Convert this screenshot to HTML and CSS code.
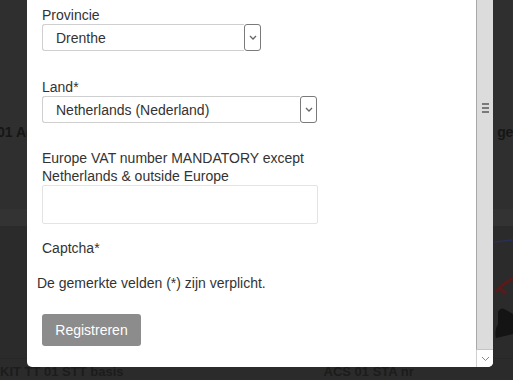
FILE: index.html
```html
<!DOCTYPE html>
<html lang="nl">
  <head>
    <meta charset="UTF-8" />
    <title>Registreren</title>
    <link rel="stylesheet" href="styles.css">
  </head>
  <body>
    <div class="page">
      <div class="top-row">
        <h3 class="card-title left-title">01 Accessoires</h3>
        <h3 class="card-title right-title">ge</h3>
      </div>
      <div class="band"></div>
      <div class="bottom-row">
        <div class="product-pic">
          <svg width="21" height="110" viewBox="0 0 21 110">
            <path d="M2 8 L21 6" stroke="#2a2f55" stroke-width="1.5" fill="none" />
            <path d="M3 58 L12 50 L21 44 M8 54 L14 60" stroke="#5a1a1a" stroke-width="3" fill="none" />
            <path d="M6 78 Q9 72 14 76 L21 80 L21 100 L4 104 Q2 96 6 90 Z" fill="#141414" />
          </svg>
        </div>
      </div>
      <div class="footer-row">
        <span class="footer-text">KIT TT 01 STT basis</span>
        <span class="footer-text second">ACS 01 STA nr</span>
      </div>
    </div>

    <div class="modal">
      <div class="modal-content">
        <form id="registratie">
          <div class="field field-provincie">
            <label class="field-label" for="provincie">Provincie</label>
            <div class="select-box short">
              <select id="provincie" class="select-field">
                <option>Drenthe</option>
              </select>
              <span class="select-arrow">
                <svg width="8" height="5" viewBox="0 0 8 5"><path d="M1 1 L4 4 L7 1" stroke="#666" stroke-width="1.3" fill="none" /></svg>
              </span>
            </div>
          </div>
          <div class="field field-land">
            <label class="field-label" for="land">Land*</label>
            <div class="select-box long">
              <select id="land" class="select-field">
                <option>Netherlands (Nederland)</option>
              </select>
              <span class="select-arrow">
                <svg width="8" height="5" viewBox="0 0 8 5"><path d="M1 1 L4 4 L7 1" stroke="#666" stroke-width="1.3" fill="none" /></svg>
              </span>
            </div>
          </div>
          <div class="field field-vat">
            <label class="field-label" for="vat">Europe VAT number MANDATORY except Netherlands &amp; outside Europe</label>
            <input type="text" id="vat" class="input-field" />
          </div>
          <div class="field field-captcha">
            <label class="field-label">Captcha*</label>
          </div>
          <p class="required-note">De gemerkte velden (*) zijn verplicht.</p>
          <div class="field">
            <button type="submit" class="submit-btn">Registreren</button>
          </div>
        </form>
      </div>
      <div class="scrollbar">
        <div class="scroll-thumb">
          <span class="grip"></span>
          <span class="grip"></span>
          <span class="grip"></span>
        </div>
        <div class="scroll-down">
          <svg width="9" height="6" viewBox="0 0 9 6"><path d="M1 1 L4.5 4.5 L8 1" stroke="#888" stroke-width="1" fill="none" /></svg>
        </div>
      </div>
    </div>
  </body>
</html>
```

FILE: styles.css
```css
body {
  margin: 0;
  background: #2b2b2b;
  font: 14px "Liberation Sans", Arial, Helvetica, sans-serif;
  color: #333;
  overflow: hidden;
  height: 380px;
}

/* dimmed page behind the popup */
.page {
  width: 513px;
  height: 380px;
  display: flex;
  flex-direction: column;
}
.top-row {
  height: 215px;
  background: #2f2f2f;
  display: flex;
  justify-content: space-between;
  align-items: flex-start;
}
.card-title {
  margin: 0;
  padding-top: 124px;
  font-size: 14px;
  font-weight: bold;
  line-height: 16px;
  color: #161616;
  white-space: nowrap;
}
.left-title {
  text-indent: -3px;
}
.right-title {
  letter-spacing: -0.3px;
}
.band {
  height: 17px;
  background: #333;
}
.bottom-row {
  height: 136px;
  display: flex;
  justify-content: flex-end;
}
.product-pic {
  padding-top: 8px;
}
.footer-row {
  flex: 1;
  display: flex;
  gap: 200px;
  background: #2b2b2b;
  border-top: 1px solid #272727;
}
.footer-text {
  font-size: 13px;
  font-weight: bold;
  color: #1c1c1c;
  line-height: 16px;
  margin-top: 5px;
  white-space: nowrap;
}

/* popup */
.modal {
  position: absolute;
  left: 27px;
  top: -20px;
  width: 466px;
  height: 387px;
  background: #fff;
  border-radius: 5px;
  overflow: hidden;
  display: flex;
}
.modal-content {
  flex: 1;
  padding: 26px 10px 0 10px;
}
.field {
  margin-left: 5px;
}
.field-label {
  display: block;
  line-height: 18px;
  color: #333;
}
.field-provincie {
  margin-bottom: 27px;
}
.field-land {
  margin-bottom: 26px;
}
.field-vat {
  width: 276px;
  margin-bottom: 15px;
}
.field-captcha {
  margin-bottom: 17px;
}

.select-box {
  display: flex;
  height: 27px;
}
.select-box.short {
  width: 219px;
}
.select-box.long {
  width: 275px;
}
.select-field {
  flex: 1;
  -webkit-appearance: none;
  appearance: none;
  border: 1px solid #cfcfcf;
  border-right: none;
  border-radius: 3px 0 0 3px;
  padding: 0 0 0 13px;
  margin: 0;
  font: 14px "Liberation Sans", Arial, sans-serif;
  color: #333;
  background: #fff;
  outline: none;
}
.select-arrow {
  width: 15px;
  border: 1px solid #7a7a7a;
  border-radius: 3px;
  display: flex;
  align-items: center;
  justify-content: center;
  background: #fff;
}

.input-field {
  display: block;
  box-sizing: border-box;
  width: 276px;
  height: 39px;
  margin: 0;
  border: 1px solid #e3e3e3;
  border-radius: 2px;
  outline: none;
}

.required-note {
  margin: 0 0 22px 0;
  line-height: 18px;
  color: #333;
}

.submit-btn {
  width: 99px;
  height: 32px;
  border: none;
  border-radius: 3px;
  background: #8c8c8c;
  color: #fff;
  font: 14px "Liberation Sans", Arial, sans-serif;
  padding: 0 12px;
}

/* fake scrollbar */
.scrollbar {
  width: 17px;
  display: flex;
  flex-direction: column;
}
.scroll-thumb {
  flex: 1;
  background: #dcdcdc;
  border-left: 1px solid #a8a8a8;
  border-bottom: 1px solid #c4c4c4;
  display: flex;
  flex-direction: column;
  align-items: center;
  gap: 2px;
  padding-top: 123px;
}
.grip {
  width: 7px;
  height: 2px;
  background: #7a7a7a;
}
.scroll-down {
  height: 17px;
  background: #fff;
  border-left: 1px solid #d0d0d0;
  display: flex;
  align-items: center;
  justify-content: center;
}
```
